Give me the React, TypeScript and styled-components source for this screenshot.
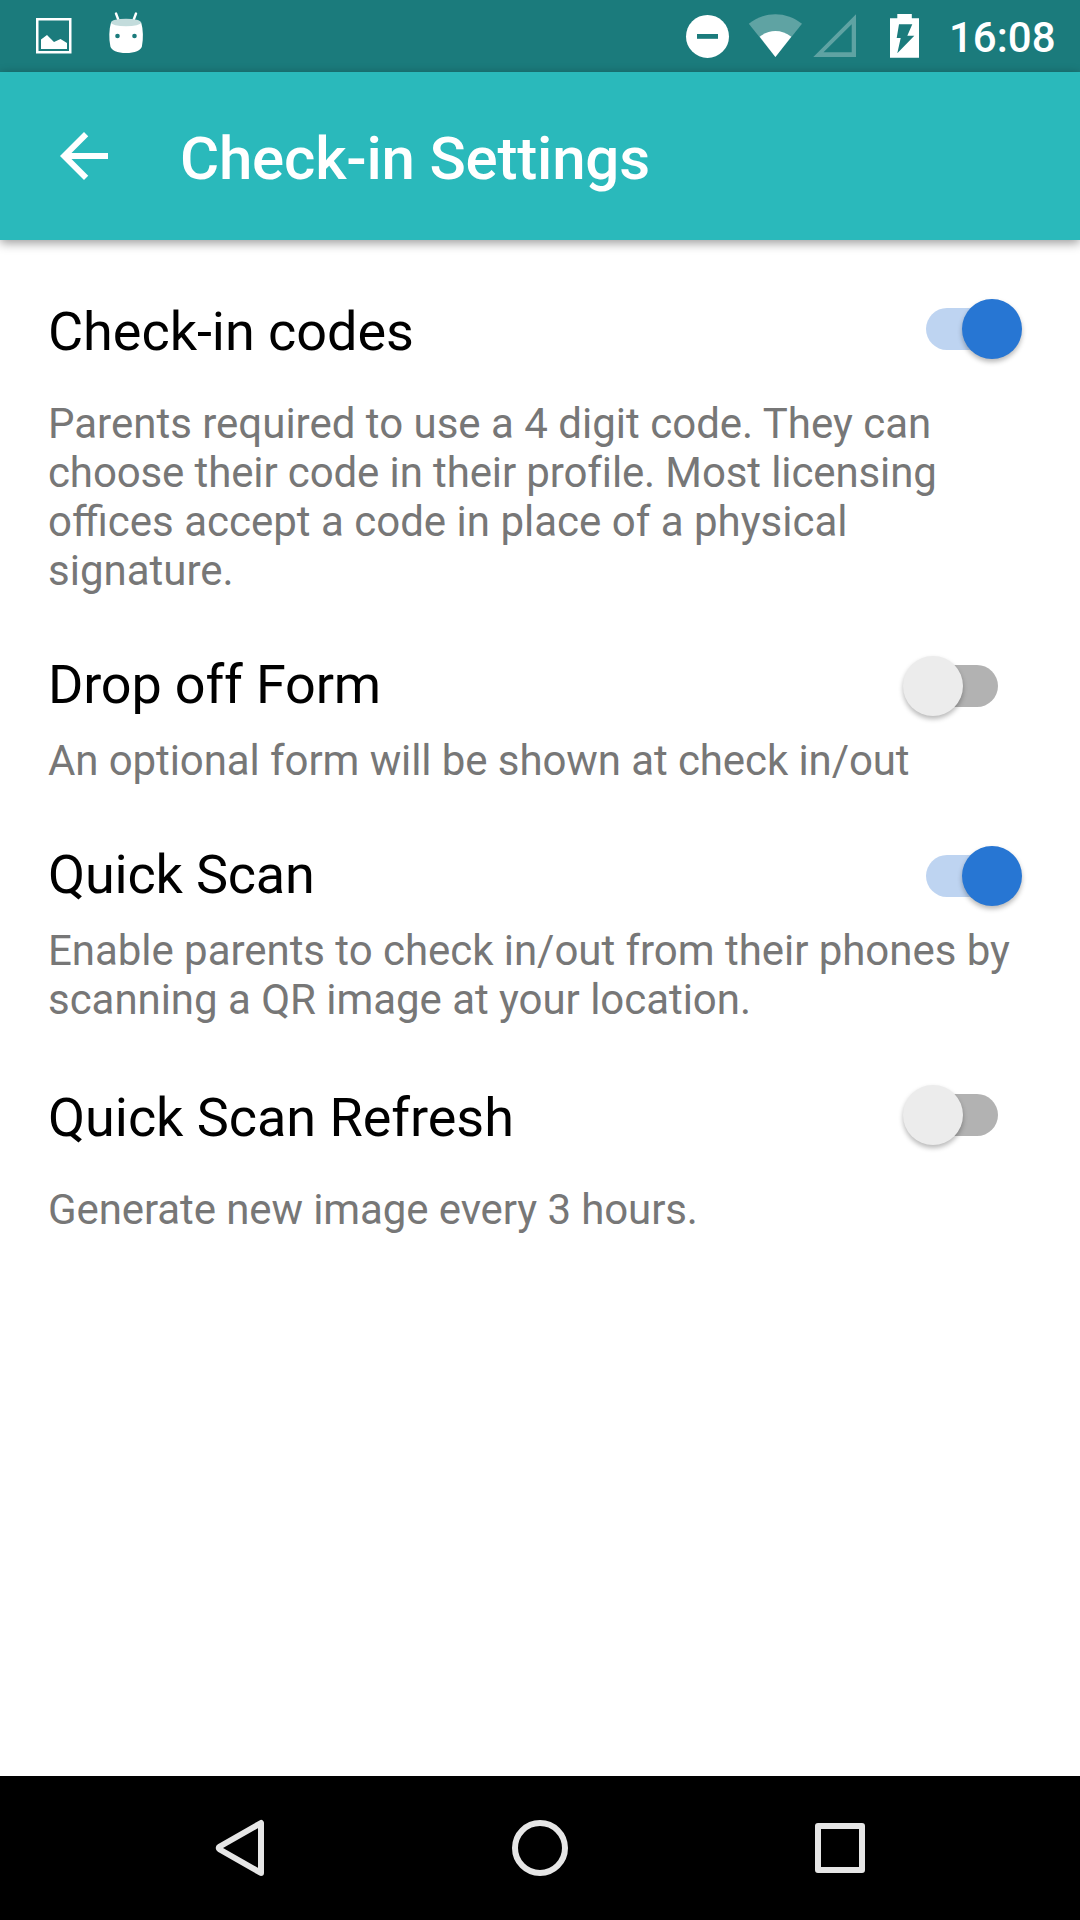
import React from "react";
import styled, { createGlobalStyle } from "styled-components";

const Global = createGlobalStyle`
  * { box-sizing: border-box; }
  body { margin: 0; background: #fff; font-family: Roboto, sans-serif; }
`;

const Screen = styled.div`
  width: 1080px;
  height: 1920px;
  display: flex;
  flex-direction: column;
  background: #fff;
  overflow: hidden;
`;

const StatusBar = styled.header`
  height: 72px;
  flex: none;
  display: flex;
  justify-content: space-between;
  background: #1b7b7c;
  color: #fff;
`;

const IconGroup = styled.div<{ $inset?: number }>`
  display: flex;
  padding-left: ${(p) => p.$inset ?? 0}px;
`;

const Icon = styled.svg`
  display: block;
  flex: none;
`;

const Clock = styled.span`
  font-size: 42px;
  font-weight: 500;
  line-height: 72px;
  width: 131px;
  padding-top: 2px;
  white-space: nowrap;
`;

const AppBar = styled.div`
  height: 168px;
  flex: none;
  display: flex;
  align-items: center;
  background: #2ab9bb;
  color: #fff;
  box-shadow: 0 3px 10px rgba(0, 0, 0, 0.4);
`;

const BackButton = styled.button`
  border: 0;
  padding: 0;
  margin: 0 0 0 48px;
  width: 132px;
  background: none;
  color: inherit;
`;

const Title = styled.h1`
  margin: 0;
  padding-top: 5px;
  font-size: 60px;
  font-weight: 500;
  line-height: 70px;
  letter-spacing: -0.2px;
  white-space: nowrap;
`;

const Settings = styled.main`
  flex: 1;
  padding: 55px 48px 0;
`;

const Setting = styled.section<{ $gap: number }>`
  margin-bottom: ${(p) => p.$gap}px;
`;

const SettingRow = styled.div<{ $gap: number }>`
  display: flex;
  align-items: center;
  justify-content: space-between;
  height: 72px;
  margin-bottom: ${(p) => p.$gap}px;
`;

const Name = styled.h2<{ $tracking: number }>`
  margin: 0;
  padding-top: 2px;
  font-size: 54px;
  font-weight: 400;
  line-height: 72px;
  letter-spacing: ${(p) => p.$tracking}px;
  color: #000;
`;

const Description = styled.p`
  margin: 0;
  font-size: 42px;
  line-height: 49px;
  color: #777;
`;

const Line = styled.span<{ $tracking: number }>`
  display: block;
  white-space: nowrap;
  letter-spacing: ${(p) => (p.$tracking ? `${p.$tracking}px` : "normal")};
`;

const Toggle = styled.button<{ $on: boolean; $lift: number }>`
  border: 0;
  padding: 0;
  width: 72px;
  height: 42px;
  border-radius: 21px;
  margin: 0 34px ${(p) => p.$lift * 2}px 0;
  display: flex;
  align-items: center;
  justify-content: ${(p) => (p.$on ? "flex-end" : "flex-start")};
  background: ${(p) => (p.$on ? "#bed4f1" : "#b2b2b2")};
`;

const Thumb = styled.span<{ $on: boolean }>`
  flex: none;
  width: 60px;
  height: 60px;
  margin: ${(p) => (p.$on ? "0 -23.5px 0 0" : "0 0 0 -23.5px")};
  border-radius: 50%;
  background: ${(p) => (p.$on ? "#2776d3" : "#ececec")};
  box-shadow: 0 3px 5px rgba(0, 0, 0, 0.28);
`;

const NavBar = styled.nav`
  height: 144px;
  flex: none;
  display: flex;
  align-items: center;
  justify-content: center;
  gap: 228px;
  background: #000;
`;

const NavButton = styled.button`
  border: 0;
  padding: 0;
  width: 72px;
  height: 72px;
  background: none;
`;

type Item = {
  name: string;
  tracking: number;
  on: boolean;
  lift: number;
  inner: number;
  gap: number;
  lines: [string, number][];
};

const settings: Item[] = [
  {
    name: "Check-in codes",
    tracking: -0.04,
    on: true,
    lift: 2,
    inner: 32,
    gap: 53,
    lines: [
      ["Parents required to use a 4 digit code. They can", 0],
      ["choose their code in their profile. Most licensing", -0.12],
      ["offices accept a code in place of a physical", 0],
      ["signature.", 0],
    ],
  },
  {
    name: "Drop off Form",
    tracking: -0.17,
    on: false,
    lift: -2,
    inner: 16,
    gap: 53,
    lines: [["An optional form will be shown at check in/out", -0.09]],
  },
  {
    name: "Quick Scan",
    tracking: -0.2,
    on: true,
    lift: -2,
    inner: 16,
    gap: 57,
    lines: [
      ["Enable parents to check in/out from their phones by", -0.04],
      ["scanning a QR image at your location.", -0.04],
    ],
  },
  {
    name: "Quick Scan Refresh",
    tracking: -0.05,
    on: false,
    lift: 2,
    inner: 32,
    gap: 0,
    lines: [["Generate new image every 3 hours.", -0.1]],
  },
];

function NotificationIcons() {
  return (
    <Icon width="120" height="72" viewBox="36 0 120 72" fill="#fff">
      <rect x="37.25" y="19.25" width="33" height="33" fill="none" stroke="#fff" strokeWidth="2.5" />
      <path d="M41 49V39.5L47 35l7 7 6.5-3 6.5 4v6z" />
      <path d="M116 13.5l3 8M136 13.5l-3 8" stroke="#fff" strokeWidth="2.4" strokeLinecap="round" />
      <path d="M111 22.5c-2 7-2.300 16-.6 24 .8 3.800 7 6.500 15.700 6.500s15-2.700 15.800-6.500c1.600-8 1.300-17-.7-24z" />
      <ellipse cx="126" cy="22.500" rx="15" ry="3.800" fill="#c3dcdc" />
      <circle cx="117.500" cy="36" r="2.300" fill="#1b7b7c" />
      <circle cx="134.500" cy="36" r="2.300" fill="#1b7b7c" />
    </Icon>
  );
}

function SystemIcons() {
  return (
    <Icon width="269" height="72" viewBox="680 0 269 72" fill="#fff">
      <circle cx="707.5" cy="36.4" r="21.500" />
      <rect x="697" y="34" width="21" height="4.800" fill="#1b7b7c" />
      <path d="M748.800 23.800C756.500 17.500 766 14.200 775.400 14.200S794.500 17.500 802 23.800L775.400 57z" opacity=".3" />
      <path d="M759.700 36.700C764.500 33 770 31 775.400 31s11.200 2 15.900 5.700L775.400 57z" />
      <path d="M813.300 57H856V14.300zM823.500 52.300L851.700 24.300v28z" fillRule="evenodd" opacity=".3" />
      <path fillRule="evenodd" d="M890 18.300h7.300V14h14.500v4.300h7.200v39.500H890zM899 24.300l-2.300 13.700h4l-3.400 15.200L914.300 35.700h-7l5-11.400z" />
    </Icon>
  );
}

export default function App() {
  return (
    <Screen>
      <Global />
      <StatusBar>
        <IconGroup $inset={36}>
          <NotificationIcons />
        </IconGroup>
        <IconGroup>
          <SystemIcons />
          <Clock>16:08</Clock>
        </IconGroup>
      </StatusBar>
      <AppBar>
        <BackButton aria-label="Back">
          <Icon width="72" height="72" viewBox="0 0 24 24" fill="#fff">
            <path d="M20 11H7.830l5.590-5.590L12 4l-8 8 8 8 1.410-1.410L7.830 13H20z" />
          </Icon>
        </BackButton>
        <Title>Check-in Settings</Title>
      </AppBar>
      <Settings>
        {settings.map((s) => (
          <Setting key={s.name} $gap={s.gap}>
            <SettingRow $gap={s.inner}>
              <Name $tracking={s.tracking}>{s.name}</Name>
              <Toggle $on={s.on} $lift={s.lift} aria-pressed={s.on}>
                <Thumb $on={s.on} />
              </Toggle>
            </SettingRow>
            <Description>
              {s.lines.map(([text, tracking]) => (
                <Line key={text} $tracking={tracking}>
                  {text}
                </Line>
              ))}
            </Description>
          </Setting>
        ))}
      </Settings>
      <NavBar>
        <NavButton aria-label="Back">
          <Icon width="72" height="72" viewBox="0 0 72 72" fill="none" stroke="#e6e6e6" strokeWidth="6" strokeLinejoin="round">
            <path d="M57 11v50L15.800 37.500Q13.600 36 15.800 34.500z" />
          </Icon>
        </NavButton>
        <NavButton aria-label="Home">
          <Icon width="72" height="72" viewBox="0 0 72 72" fill="none" stroke="#e6e6e6" strokeWidth="6">
            <circle cx="36" cy="36" r="25" />
          </Icon>
        </NavButton>
        <NavButton aria-label="Overview">
          <Icon width="72" height="72" viewBox="0 0 72 72" fill="none" stroke="#e6e6e6" strokeWidth="6" strokeLinejoin="round">
            <rect x="14" y="14" width="44" height="44" />
          </Icon>
        </NavButton>
      </NavBar>
    </Screen>
  );
}
